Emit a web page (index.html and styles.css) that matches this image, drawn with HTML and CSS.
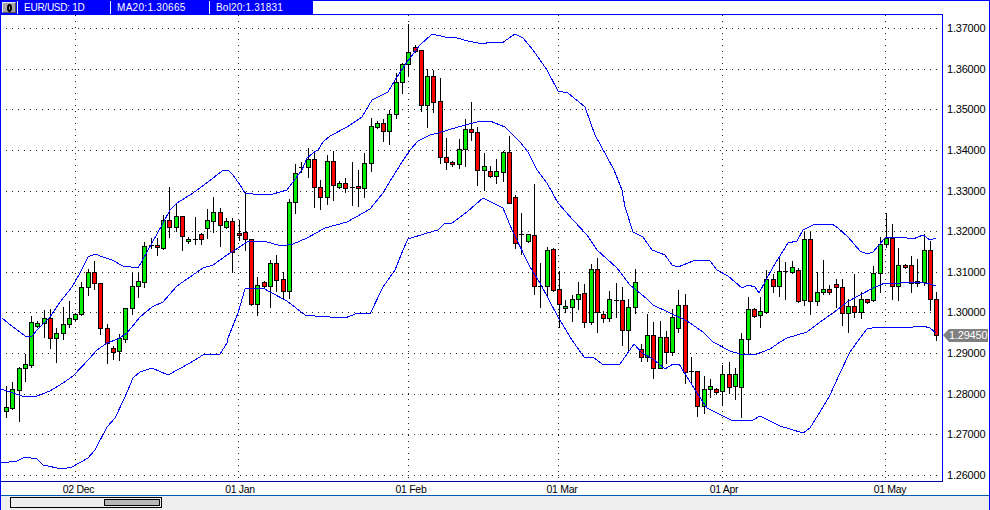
FILE: index.html
```html
<!DOCTYPE html>
<html lang="en">
<head>
<meta charset="utf-8">
<title>EUR/USD: 1D</title>
<link rel="stylesheet" href="styles.css">
</head>
<body>
<div class="window">
  <div class="toolbar">
    <span class="menu-btn"><span class="menu-glyph"></span></span>
    <span class="legend legend-symbol">EUR/USD: 1D</span>
    <span class="legend legend-ma">MA20:1.30665</span>
    <span class="legend legend-bol">Bol20:1.31831</span>
  </div>
  <svg id="chart" class="chart" viewBox="1 14 988 481" width="988" height="481" xmlns="http://www.w3.org/2000/svg"></svg>
  <div class="statusbar">
    <div class="scroll-track"><div class="scroll-thumb"></div></div>
  </div>
</div>
<script src="chart.js"></script>
</body>
</html>
```
FILE: styles.css
```css
html, body {
  margin: 0;
  padding: 0;
  background: #fff;
}
.window {
  width: 990px;
  height: 510px;
  box-sizing: border-box;
  border-top: 1px solid #0000ff;
  border-left: 1px solid #0000ff;
  border-right: 1px solid #0000ff;
  display: flex;
  flex-direction: column;
  background: #fff;
  overflow: hidden;
  font-family: "Liberation Sans", Arial, sans-serif;
}
.toolbar {
  display: flex;
  align-items: center;
  flex: none;
  width: 312px;
  height: 13px;
  background: #0000ff;
  color: #fff;
  font-size: 10px;
}
.menu-btn {
  box-sizing: border-box;
  width: 14px;
  height: 11px;
  margin-left: 1px;
  display: flex;
  align-items: center;
  justify-content: center;
  background: #a8a8a8;
  border: 1px solid;
  border-color: #e8e8e8 #505050 #505050 #e8e8e8;
}
.menu-glyph {
  box-sizing: border-box;
  width: 5px;
  height: 8px;
  border: 2px solid #000;
  border-radius: 50%;
}
.legend {
  box-sizing: border-box;
  height: 13px;
  line-height: 13px;
  white-space: nowrap;
  border-left: 1px solid #fff;
}
.legend-symbol {
  width: 93px;
  margin-left: 1px;
  padding-left: 6px;
  letter-spacing: -0.25px;
}
.legend-ma {
  width: 99px;
  padding-left: 6px;
  letter-spacing: 0.3px;
}
.legend-bol {
  flex: 1;
  padding-left: 6px;
  letter-spacing: 0.2px;
}
.chart {
  display: block;
  flex: none;
}
.statusbar {
  flex: 1;
  box-sizing: border-box;
  border-top: 1px solid #0058b0;
  background: #eeeeee;
  padding: 1px 0 0 9px;
}
.scroll-track {
  box-sizing: border-box;
  width: 152px;
  height: 11px;
  border: 1px solid #000;
  background: #eeeeee;
  padding: 1px;
  display: flex;
  justify-content: flex-end;
}
.scroll-thumb {
  box-sizing: border-box;
  width: 56px;
  height: 100%;
  border: 1px solid #000;
  background: #b8b8b8;
}
.grid-line {
  stroke: #222;
  stroke-width: 1;
  stroke-dasharray: 1 5;
  shape-rendering: crispEdges;
  fill: none;
}
.frame-top { stroke: #0000ff; stroke-width: 1; shape-rendering: crispEdges; }
.frame-bottom { stroke: #0000a8; stroke-width: 1; shape-rendering: crispEdges; }
.wick { stroke: #000; stroke-width: 1; shape-rendering: crispEdges; }
.doji { stroke: #000; stroke-width: 1; shape-rendering: crispEdges; }
.body { stroke: #000; stroke-width: 1; shape-rendering: crispEdges; }
.body-g { fill: #00ee00; }
.body-r { fill: #ff0000; }
.band {
  fill: none;
  stroke: #0000ff;
  stroke-width: 1;
  shape-rendering: crispEdges;
}
.axis-text {
  font-family: "Liberation Sans", Arial, sans-serif;
  font-size: 11px;
  letter-spacing: -0.2px;
  fill: #000;
}
.date-text {
  font-family: "Liberation Sans", Arial, sans-serif;
  font-size: 10.5px;
  letter-spacing: -0.3px;
  fill: #000;
}
.tag { fill: #808080; }
.tag-text {
  font-family: "Liberation Sans", Arial, sans-serif;
  font-size: 11px;
  letter-spacing: -0.2px;
  fill: #fff;
}
```
FILE: chart.js
```js
// Candles: colour, high, body top, body bottom, low (screen pixels)
var candles = "g 386 407 411 417|g 382 389 408 409|g 367 368 390 421|g 354 364 368 381|g 316 322 365 367|g 321 323 326 327|g 310 318 323 337|r 309 318 338 348|g 328 333 338 362|g 307 324 333 339|g 301 318 324 327|g 313 314 319 320|g 282 287 314 315|g 269 272 287 295|r 261 272 283 289|r 283 283 328 334|r 324 328 343 363|r 346 348 352 359|g 334 338 351 360|g 308 308 339 342|g 273 286 308 314|g 273 281 286 297|g 242 246 282 287|g 238 245 245 248|r 238 245 247 255|g 215 220 248 249|r 187 220 227 237|g 203 216 227 231|r 216 216 236 250|g 237 239 241 243|d 217 239 239 244|r 233 234 239 244|g 209 220 228 238|g 197 212 221 232|r 208 212 225 246|g 218 221 227 228|r 218 221 252 272|r 220 233 235 240|r 192 232 239 250|r 239 239 304 305|g 277 285 304 315|r 281 282 286 287|g 260 263 286 307|r 255 263 280 291|r 272 279 291 299|g 199 202 291 298|g 164 173 202 213|d 162 167 167 172|g 148 159 167 177|r 152 159 187 207|r 180 187 197 209|g 155 161 197 204|r 151 161 185 200|g 181 183 187 188|r 178 183 188 192|d 162 187 187 205|r 170 186 188 206|g 153 163 188 197|g 118 126 163 171|g 121 123 127 128|r 119 123 131 141|g 110 114 131 144|g 73 82 114 118|g 63 64 82 93|g 24 52 64 76|r 45 47 51 52|r 50 50 105 111|g 69 76 105 127|r 70 76 102 112|r 78 101 157 163|r 138 157 162 169|r 161 162 164 166|g 139 149 164 168|g 119 129 149 166|r 102 129 132 140|r 127 132 170 185|g 153 166 170 190|r 166 171 176 177|g 159 171 176 183|g 151 152 172 181|r 136 152 203 203|r 195 197 243 248|d 213 234 234 254|g 234 234 241 242|r 184 235 286 294|d 263 286 286 307|g 247 250 286 297|r 248 249 290 291|r 271 289 304 327|g 300 306 308 312|g 295 299 307 321|g 282 294 299 309|r 284 293 322 327|g 264 269 322 324|r 258 269 312 332|r 311 314 318 322|g 291 299 318 321|d 283 300 300 317|r 287 300 330 345|g 299 307 330 350|g 269 282 307 313|r 344 349 357 361|g 314 335 357 361|r 322 335 368 378|g 321 337 368 368|r 331 337 352 363|g 309 317 352 355|g 290 305 328 332|r 294 305 372 383|d 357 371 371 383|r 371 371 406 416|g 376 389 406 413|g 379 386 389 397|r 388 389 392 394|g 365 374 391 405|r 362 374 387 393|g 368 374 386 399|g 333 339 387 417|g 297 309 339 353|r 308 309 316 317|g 297 311 315 327|g 270 279 312 313|r 274 279 286 292|g 256 271 286 296|d 262 271 271 299|g 261 267 272 273|r 268 270 301 302|g 232 239 300 305|r 232 239 301 314|g 272 292 301 305|g 260 289 292 294|r 285 289 292 294|r 279 284 287 307|r 279 287 313 325|g 299 306 313 332|r 274 306 312 317|g 292 299 312 318|r 299 299 302 303|g 266 273 300 301|g 237 244 273 292|g 213 238 244 247|r 224 238 286 299|g 248 265 286 300|r 264 265 267 268|r 256 265 283 292|r 259 281 283 286|g 234 250 282 285|r 241 250 299 310|r 292 299 335 340";

var upper = "2,318 8,323 25,336 32,336 37,330 50,317 60,302 72,287 80,273 88,257 95,254 103,257 112,260 123,266 138,268 147,252 162,225 170,210 177,203 193,193 208,182 222,171 228,170 233,175 240,185 245,193 253,194 273,194 287,190 293,182 302,170 307,158 313,153 318,150 323,142 330,136 347,127 362,117 372,100 388,92 395,80 407,62 420,45 432,34 445,37 457,38 468,41 483,44 490,42 502,43 515,34 523,38 533,50 547,70 558,91 568,93 585,107 595,135 607,157 614,170 622,190 625,207 633,232 643,237 652,250 660,253 665,255 672,265 678,267 693,261 698,260 710,261 717,270 728,276 742,288 748,285 755,287 759,293 773,267 788,243 797,241 803,230 815,224 832,224 838,228 848,237 860,251 867,254 873,252 885,238 900,237 913,239 923,235 930,240 936,238";
var middle = "1,389 13,393 25,397 37,396 50,391 63,383 73,376 90,358 97,350 107,343 118,339 127,333 140,317 152,307 163,302 177,286 190,277 203,268 213,265 227,255 238,248 247,242 263,241 282,246 293,244 307,238 325,228 347,222 363,213 370,209 383,193 392,178 402,162 410,150 418,141 430,135 438,133 458,127 477,122 490,121 505,127 520,142 528,152 537,170 547,183 558,203 573,220 587,235 597,250 617,268 630,285 647,299 653,305 670,313 687,321 703,332 713,342 730,351 740,354 757,354 770,349 780,342 787,338 807,332 823,320 837,310 847,302 860,295 873,288 885,283 900,283 917,282 930,284 936,286";
var lower = "1,463 17,461 25,457 37,459 43,465 62,469 72,467 88,458 95,450 107,427 115,418 125,397 133,378 140,372 152,368 168,375 190,363 203,355 220,354 227,343 228,338 238,313 245,289 263,288 270,292 287,301 305,315 315,316 345,318 358,313 370,314 383,287 395,270 403,250 408,239 427,233 438,230 445,223 452,223 467,212 483,198 503,208 512,230 530,267 540,283 558,317 572,340 584,357 593,357 602,364 620,364 634,344 642,353 653,359 665,369 673,364 679,364 684,372 697,393 707,408 727,418 733,421 753,420 760,416 780,426 803,433 810,428 820,412 830,395 840,373 850,352 860,338 867,329 877,327 913,327 923,326 930,328 936,333";

var gridY = [28, 69, 109, 150, 191, 231, 272, 312, 353, 394, 434, 475];
var gridX = [75, 238, 408, 558, 722, 885];
var prices = ["1.37000", "1.36000", "1.35000", "1.34000", "1.33000", "1.32000", "1.31000", "1.30000", "1.29000", "1.28000", "1.27000", "1.26000"];
var dates = [["02 Dec", 78.5], ["01 Jan", 240], ["01 Feb", 411], ["01 Mar", 562], ["01 Apr", 724], ["01 May", 890]];

var svg = document.getElementById("chart");
var NS = "http://www.w3.org/2000/svg";

function add(tag, attrs, text) {
  var el = document.createElementNS(NS, tag);
  for (var k in attrs) el.setAttribute(k, attrs[k]);
  if (text) el.textContent = text;
  svg.appendChild(el);
  return el;
}
function hLine(x1, x2, y, cls) {
  add("line", { x1: x1, x2: x2, y1: y + 0.5, y2: y + 0.5, "class": cls });
}
function vLine(x, y1, y2, cls) {
  add("line", { x1: x + 0.5, x2: x + 0.5, y1: y1, y2: y2, "class": cls });
}

gridY.forEach(function (y, i) {
  hLine(6, 940, y, "grid-line");
  add("text", { x: 947, y: y + 4, "class": "axis-text" }, prices[i]);
});
gridX.forEach(function (x) { vLine(x, 15, 481, "grid-line"); });

hLine(1, 943, 14, "frame-top");
vLine(942, 14, 482, "frame-top");
hLine(1, 943, 481, "frame-bottom");

dates.forEach(function (d) {
  add("text", { x: d[1], y: 493, "text-anchor": "middle", "class": "date-text" }, d[0]);
});

candles.split("|").forEach(function (row, i) {
  var p = row.split(" ");
  var hi = +p[1], top = +p[2], bot = +p[3], lo = +p[4];
  var x = Math.round(6 + 6.285 * i);
  vLine(x, hi, lo + 1, "wick");
  if (bot > top) {
    add("rect", { x: x - 1.5, y: top + 0.5, width: 4, height: bot - top, "class": "body body-" + p[0] });
  } else {
    hLine(x - 2, x + 3, top, "doji");
  }
});

[upper, middle, lower].forEach(function (pts) {
  add("polyline", { points: pts, "class": "band" });
});

add("polygon", { points: "943,335 949,329 988,329 988,342 949,342", "class": "tag" });
add("text", { x: 949, y: 339, "class": "tag-text" }, "1.29450");
```
